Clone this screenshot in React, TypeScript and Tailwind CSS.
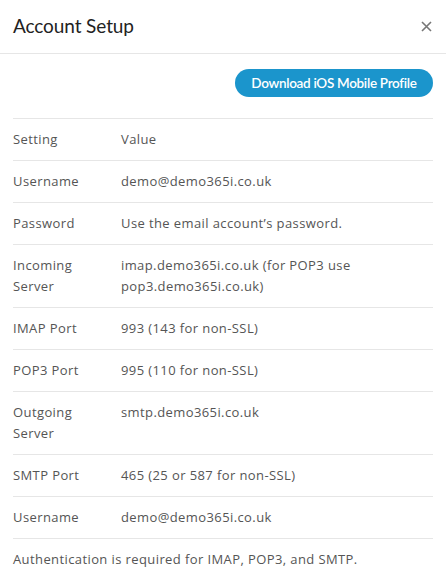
import React from 'react';

const rows: { label: string; value: string }[] = [
  { label: 'Username', value: 'demo@demo365i.co.uk' },
  { label: 'Password', value: 'Use the email account\u2019s password.' },
  { label: 'Incoming Server', value: 'imap.demo365i.co.uk (for POP3 use pop3.demo365i.co.uk)' },
  { label: 'IMAP Port', value: '993 (143 for non-SSL)' },
  { label: 'POP3 Port', value: '995 (110 for non-SSL)' },
  { label: 'Outgoing Server', value: 'smtp.demo365i.co.uk' },
  { label: 'SMTP Port', value: '465 (25 or 587 for non-SSL)' },
  { label: 'Username', value: 'demo@demo365i.co.uk' },
];

function App() {
  return (
    <div className="w-[446px] h-[585px] bg-white font-['Open_Sans',sans-serif] text-[#555] overflow-hidden">
      <header className="flex items-center justify-between h-[54px] pl-[13px] pr-[14px] border-b border-[#e6e6e6]">
        <h1 className="font-['Lato',sans-serif] text-[19px] text-[#222] tracking-[-0.1px]">Account Setup</h1>
        <button className="text-[#777]">
          <svg width="11" height="11" viewBox="0 0 11 11" stroke="currentColor" strokeWidth="1.6">
            <path d="M1 1L10 10M10 1L1 10" />
          </svg>
        </button>
      </header>
      <div className="px-[13px] pt-[15px]">
        <div className="flex justify-end">
          <button className="h-[28px] w-[198px] rounded-full bg-[#1b95cc] text-white font-['Lato',sans-serif] text-[13.5px] font-semibold tracking-[-0.3px]">
            Download iOS Mobile Profile
          </button>
        </div>
        <div className="mt-[21px] border-t border-[#e6e6e6] text-[13px] leading-[21px] tracking-[0.4px]">
          <div className="flex py-[10px] border-b border-[#e6e6e6]">
            <div className="w-[108px] shrink-0">Setting</div>
            <div>Value</div>
          </div>
          {rows.map((r, i) => (
            <div key={i} className="flex py-[10px] border-b border-[#e6e6e6]">
              <div className="w-[108px] shrink-0 pr-4">{r.label}</div>
              <div className="pr-16">{r.value}</div>
            </div>
          ))}
          <p className="py-[10px]">Authentication is required for IMAP, POP3, and SMTP.</p>
        </div>
      </div>
    </div>
  );
}

export default App;
